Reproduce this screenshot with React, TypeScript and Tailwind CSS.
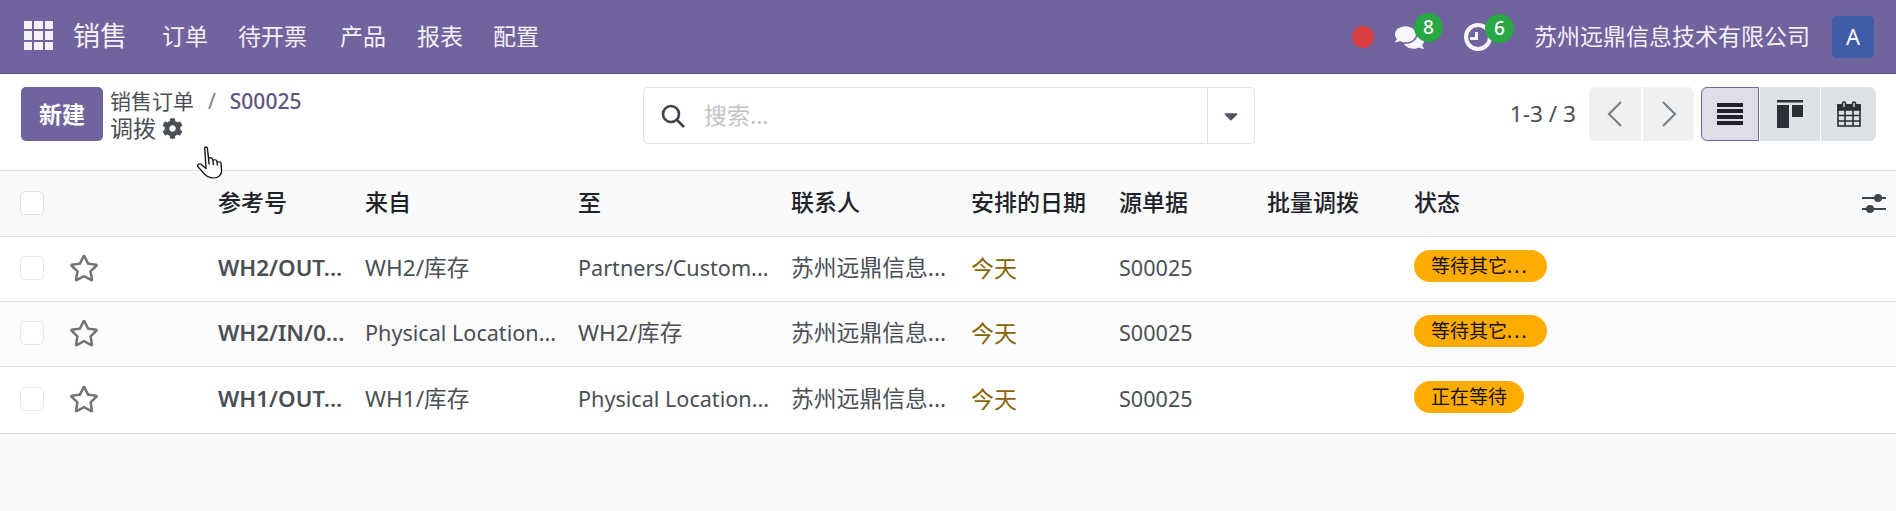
import React from 'react';
import { FaCog, FaComments, FaCaretDown, FaRegStar } from 'react-icons/fa';

const gridCols = 'grid grid-cols-[218px_147px_213px_213px_180px_148px_148px_147px_1fr] items-center';

const rows = [
  { ref: 'WH2/OUT...', from: 'WH2/库存', fromCjk: true, to: 'Partners/Custom...', toCjk: false, status: '等待其它', more: true, bg: 'bg-white', h: 'h-[65px]' },
  { ref: 'WH2/IN/0...', from: 'Physical Location...', fromCjk: false, to: 'WH2/库存', toCjk: true, status: '等待其它', more: true, bg: 'bg-[#fcfcfd]', h: 'h-[65px]' },
  { ref: 'WH1/OUT...', from: 'WH1/库存', fromCjk: true, to: 'Physical Location...', toCjk: false, status: '正在等待', more: false, bg: 'bg-white', h: 'h-[67px]' },
];

const headers = ['参考号', '来自', '至', '联系人', '安排的日期', '源单据', '批量调拨', '状态'];

const menu = [
  { label: '订单', cls: 'w-[76px]' },
  { label: '待开票', cls: 'w-[102px]' },
  { label: '产品', cls: 'w-[77px]' },
  { label: '报表', cls: 'w-[76px]' },
  { label: '配置', cls: 'w-[60px]' },
];

function AppsIcon() {
  return (
    <div className="grid grid-cols-3 gap-[2px] w-[29px] h-[29px] -mt-[2px]">
      {Array.from({ length: 9 }).map((_, i) => (
        <div key={i} className="bg-[#f3f1f7]" />
      ))}
    </div>
  );
}

function Chevron({ dir }: { dir: 'left' | 'right' }) {
  return (
    <svg width="16" height="28" viewBox="0 0 16 28" fill="none" stroke="#7b8086" strokeWidth="2.2">
      <path d={dir === 'left' ? 'M14 2 L2 14 L14 26' : 'M2 2 L14 14 L2 26'} />
    </svg>
  );
}

function HandCursor() {
  return (
    <svg className="absolute left-[196px] top-[72px]" width="30" height="33" viewBox="0 0 24 32" preserveAspectRatio="none" fill="white" stroke="#111" strokeWidth="1.1" strokeLinejoin="round">
      <path d="M7 2 C7 0.8 9 0.8 9.1 2 L10 12 C10.2 11 12.8 11 13 12.5 L13.5 14 C14 13 16.3 13 16.5 14.5 L17 16 C17.5 15 19.8 15 20 16.5 L20.5 24 C20.5 28 18 31 14 31 C10 31 8 29 6 26 L1.5 20 C0.5 18 3 16.5 4.5 18 L8 22 Z" />
      <path d="M10 12 L10.5 18 M13.5 14 L14 18.5 M17 16 L17.2 19" fill="none" />
    </svg>
  );
}

export default function App() {
  return (
    <div className="min-h-screen bg-[#f9fafb] font-['Noto_Sans','Noto_Sans_CJK_SC',sans-serif] text-[21.6px] text-[#4a4f55]">
      {/* navbar */}
      <nav className="h-[74px] bg-[#71639e] border-b border-[#5f5384] flex items-center text-[#f3f1f7] text-[23px]">
        <div className="ml-[24px]">
          <AppsIcon />
        </div>
        <span className="ml-[20px] text-[27px] w-[89px]">销售</span>
        {menu.map((m) => (
          <span key={m.label} className={m.cls}>
            {m.label}
          </span>
        ))}
        <div className="ml-auto flex items-center">
          <span className="w-[22px] h-[22px] rounded-full bg-[#d93e3e]" />
          <div className="relative ml-[18px] w-[34px] h-[30px] flex items-center justify-center">
            <FaComments className="text-[#f7f6fa] text-[29px] mt-[2px]" />
            <span className="absolute -top-[9px] left-[22px] w-[29px] h-[29px] rounded-full bg-[#28a745] text-white text-[19px] font-medium flex items-center justify-center">
              8
            </span>
          </div>
          <div className="relative ml-[38px] w-[28px] h-[28px] mr-[42px]">
            <div className="w-[28px] h-[28px] rounded-full border-[4px] border-[#f7f6fa]" />
            <div className="absolute left-[11px] top-[9px] w-[3px] h-[7px] bg-[#f7f6fa]" />
            <div className="absolute left-[6px] top-[14px] w-[8px] h-[3px] bg-[#f7f6fa]" />
            <span className="absolute -top-[9px] left-[21px] w-[29px] h-[29px] rounded-full bg-[#28a745] text-white text-[19px] font-medium flex items-center justify-center">
              6
            </span>
          </div>
          <span>苏州远鼎信息技术有限公司</span>
          <span className="ml-[22px] mr-[22px] w-[42px] h-[42px] rounded-[5px] bg-[#3f5ca6] text-white text-[22px] flex items-center justify-center">
            A
          </span>
        </div>
      </nav>

      {/* control panel */}
      <div className="relative h-[97px] bg-white border-b border-[#dee2e6] flex items-start pl-[21px] pt-[13px]">
        <div className="w-[622px] flex">
          <button className="w-[82px] h-[54px] rounded-[5px] bg-[#71639e] text-white font-semibold text-[23px]">新建</button>
          <div className="ml-[7px] leading-[28px]">
            <div className="text-[21px]">
              <span>销售订单</span>
              <span className="mx-[14px] text-[#7b8086]">/</span>
              <span className="text-[#5f5384] font-medium">S00025</span>
            </div>
            <div className="flex items-center -mt-[1px] text-[23px]">
              <span>调拨</span>
              <FaCog className="ml-[6px] text-[21px] text-[#4a4f55]" />
            </div>
          </div>
        </div>
        <div className="w-[612px] h-[57px] border border-[#dee2e6] rounded-[5px] flex items-center bg-white">
          <svg className="ml-[17px]" width="24" height="24" viewBox="0 0 24 24" fill="none" stroke="#3f444a" strokeWidth="2.6">
            <circle cx="10" cy="10" r="8" />
            <path d="M16 16 L23 23" />
          </svg>
          <span className="ml-[19px] text-[#c0c3c7] text-[23px]">搜索...</span>
          <div className="ml-auto w-[47px] h-full border-l border-[#dee2e6] flex items-center justify-center">
            <FaCaretDown className="text-[22px] text-[#4f5560]" />
          </div>
        </div>
        <div className="flex-1 flex items-center justify-end pr-[20px] h-[54px]">
          <span className="text-[22.6px]">1-3 / 3</span>
          <div className="ml-[13px] flex gap-[2px]">
            <div className="w-[52px] h-[54px] rounded-l-[6px] bg-[#eff0f2] flex items-center justify-center">
              <Chevron dir="left" />
            </div>
            <div className="w-[51px] h-[54px] rounded-r-[6px] bg-[#eff0f2] flex items-center justify-center">
              <Chevron dir="right" />
            </div>
          </div>
          <div className="ml-[7px] flex gap-px">
            <div className="w-[58px] h-[54px] rounded-l-[6px] bg-[#e0dde9] border border-[#71639e] flex items-center justify-center">
              <svg width="26" height="22" viewBox="0 0 26 22" fill="#1f2329">
                <rect y="0" width="26" height="4" />
                <rect y="6" width="26" height="4" />
                <rect y="12" width="26" height="4" />
                <rect y="18" width="26" height="4" />
              </svg>
            </div>
            <div className="w-[60px] h-[54px] bg-[#dfe2e5] flex items-center justify-center">
              <svg width="26" height="28" viewBox="0 0 26 28" fill="#2b2f36">
                <rect x="0" y="0" width="26" height="2.5" />
                <rect x="0" y="5" width="12" height="23" />
                <rect x="15" y="5" width="11" height="12" />
              </svg>
            </div>
            <div className="w-[55px] h-[54px] rounded-r-[6px] bg-[#dfe2e5] flex items-center justify-center">
              <svg width="24" height="26" viewBox="0 0 24 26" fill="none" stroke="#2b2f36" strokeWidth="1.6">
                <rect x="1" y="4" width="22" height="21" />
                <rect x="1" y="4" width="22" height="5" fill="#2b2f36" />
                <path d="M8 9 V25 M16 9 V25 M1 14.5 H23 M1 20 H23" />
                <rect x="5.5" y="1" width="3" height="6" rx="1.5" fill="#dfe2e5" />
                <rect x="15.5" y="1" width="3" height="6" rx="1.5" fill="#dfe2e5" />
              </svg>
            </div>
          </div>
        </div>
        <HandCursor />
      </div>

      {/* list */}
      <div className={`${gridCols} h-[66px] pb-[2px] border-b border-[#dee2e6] text-[#1f2329] text-[23px] font-medium relative`}>
        <div className="pl-[20px]">
          <div className="w-[24px] h-[24px] rounded-[5px] border border-[#dee2e6] bg-white" />
        </div>
        {headers.map((h) => (
          <div key={h}>{h}</div>
        ))}
        <svg className="absolute right-[10px] top-[23px]" width="24" height="20" viewBox="0 0 24 20" fill="#3f444a">
          <rect y="3" width="24" height="2" />
          <rect y="14" width="24" height="2" />
          <circle cx="16" cy="4" r="4" />
          <circle cx="8" cy="15" r="4" />
        </svg>
      </div>
      {rows.map((r, i) => (
        <div key={i} className={`${gridCols} ${r.h} ${r.bg} pb-[2px] border-b border-[#dee2e6]`}>
          <div className="pl-[20px] flex items-center">
            <div className="w-[24px] h-[24px] rounded-[5px] border border-[#e6e8eb] bg-white" />
            <FaRegStar className="ml-[25px] text-[30px] text-[#6f7479]" />
          </div>
          <div className="font-semibold text-[22.4px]">{r.ref}</div>
          <div className={r.fromCjk ? 'text-[22.6px]' : ''}>{r.from}</div>
          <div className={r.toCjk ? 'text-[22.6px]' : ''}>{r.to}</div>
          <div className="text-[22.8px]">苏州远鼎信息...</div>
          <div className="text-[#856404] text-[23px]">今天</div>
          <div>S00025</div>
          <div />
          <div className="flex pb-[4px]">
            <span className="flex items-center h-[32px] pl-[17px] rounded-full bg-[#ffac00] text-[#111] text-[19px] pr-[17px]">
              {r.status}
              {r.more && <span className="tracking-[2.2px] pr-[1px]">...</span>}
            </span>
          </div>
        </div>
      ))}
    </div>
  );
}
